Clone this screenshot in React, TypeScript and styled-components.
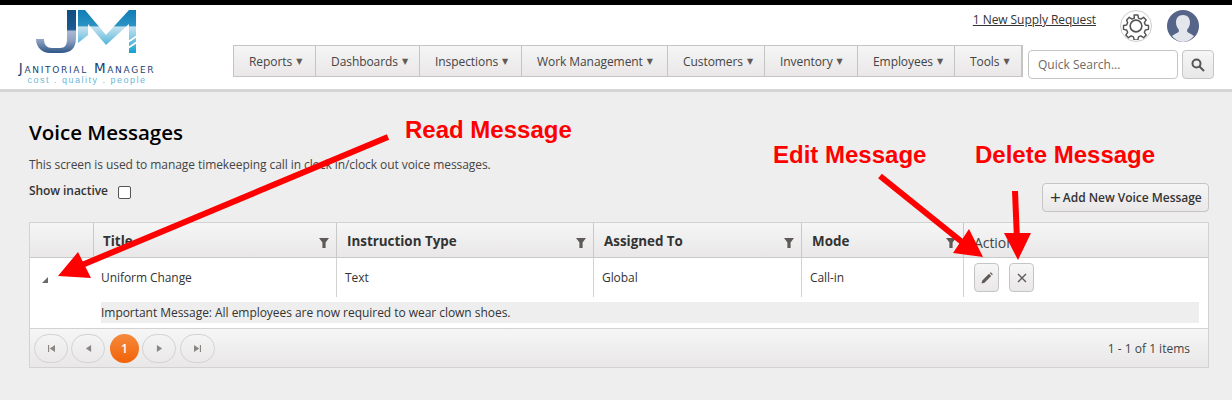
import styled, { createGlobalStyle } from 'styled-components'

const GlobalStyle = createGlobalStyle`
  html, body {
    margin: 0;
    padding: 0;
    background: #eeeeee;
    overflow: hidden;
  }
  * {
    box-sizing: border-box;
  }
`

const navItems = [
  { label: 'Reports', width: 82 },
  { label: 'Dashboards', width: 104 },
  { label: 'Inspections', width: 102 },
  { label: 'Work Management', width: 146 },
  { label: 'Customers', width: 97 },
  { label: 'Inventory', width: 93 },
  { label: 'Employees', width: 97 },
  { label: 'Tools', width: 66 },
]

const columns = [
  { label: 'Title', width: 243 },
  { label: 'Instruction Type', width: 257 },
  { label: 'Assigned To', width: 208 },
  { label: 'Mode', width: 162 },
]

const FilterIcon = () => (
  <svg width="12" height="12" viewBox="0 0 12 12">
    <path d="M1 1h10L7.600 5.600V11H4.400V5.600z" fill="#5f5a57" />
  </svg>
)

const Logo = () => (
  <svg width="102" height="44" viewBox="0 0 102 44">
    <defs>
      <linearGradient id="jGrad" x1="0" y1="0" x2="0" y2="1">
        <stop offset="0" stopColor="#0f4c81" />
        <stop offset="0.45" stopColor="#1d5a92" />
        <stop offset="0.5" stopColor="#a9b6d2" />
        <stop offset="0.7" stopColor="#8fa2c4" />
        <stop offset="1" stopColor="#2f5688" />
      </linearGradient>
      <linearGradient id="mGrad" x1="0" y1="0" x2="0" y2="1">
        <stop offset="0" stopColor="#0f7db5" />
        <stop offset="0.36" stopColor="#2a93c4" />
        <stop offset="0.4" stopColor="#c4e2ef" />
        <stop offset="0.6" stopColor="#8fcde5" />
        <stop offset="1" stopColor="#12a0d2" />
      </linearGradient>
    </defs>
    <path d="M31 0h9v28c0 10-5 15-15 15H14C6 43 0 37 0 29h8c0 6 3 9 8 9h8c5 0 7-3 7-9z" fill="url(#jGrad)" />
    <path d="M42 0h7l21 25L93 0h7v43h-7V14L70 35 52 14v11l-10 8z" fill="url(#mGrad)" />
    <path d="M92 32l9-6M92 38l9-6" stroke="#fff" strokeWidth="1.600" />
  </svg>
)

const GearIcon = () => (
  <svg width="28" height="28" viewBox="0 0 24 24" fill="none" stroke="#555" strokeWidth="1.400">
    <circle cx="12" cy="12" r="5" />
    <path d="M10.200 1.500h3.600l.6 3 2.200.9 2.600-1.700 2.500 2.500-1.700 2.600.9 2.200 3 .6v3.600l-3 .6-.9 2.200 1.700 2.600-2.500 2.500-2.600-1.700-2.200.9-.6 3h-3.600l-.6-3-2.200-.9-2.600 1.700-2.500-2.500 1.700-2.600-.9-2.200-3-.6v-3.600l3-.6.9-2.200L3.100 6.200l2.500-2.500 2.600 1.700 2.200-.9z" transform="translate(1.200 1.200) scale(.9)" strokeLinejoin="round" />
  </svg>
)

const AvatarIcon = () => (
  <svg width="32" height="32" viewBox="0 0 32 32">
    <circle cx="16" cy="16" r="16" fill="#56648a" />
    <path d="M16 5c4.600 0 7 3.200 7 7.400 0 3-1.300 5.600-2.800 7v2.100c0 1 3.800 2.300 6.800 4.500A16 16 0 0 1 16 32 16 16 0 0 1 5 26c3-2.200 6.800-3.500 6.800-4.500v-2.100c-1.500-1.400-2.800-4-2.800-7C9 8.200 11.400 5 16 5z" fill="#e3e6ea" />
  </svg>
)

const SearchIcon = () => (
  <svg width="14" height="14" viewBox="0 0 14 14" fill="none" stroke="#555" strokeWidth="2">
    <circle cx="5.500" cy="5.500" r="4" />
    <path d="M8.500 8.500l4.500 4.500" />
  </svg>
)

const PencilIcon = () => (
  <svg width="12" height="12" viewBox="0 0 12 12">
    <path d="M0.500 11.500l.8-3L8 1.800l2.200 2.200L3.500 10.700zM8.800 1l1-.8 2 2-.8 1z" fill="#5f5a57" />
  </svg>
)

const CloseIcon = () => (
  <svg width="10" height="10" viewBox="0 0 10 10" stroke="#5f5a57" strokeWidth="1.400">
    <path d="M1 1l8 8M9 1l-8 8" />
  </svg>
)

const PagerIcon = ({ kind }: { kind: 'first' | 'prev' | 'next' | 'last' }) => (
  <svg width="7" height="7" viewBox="0 0 8 8" fill="#8a8583">
    {kind === 'first' && <path d="M0 0h1.300v8H0zM8 0v8L2 4z" />}
    {kind === 'prev' && <path d="M7 0v8L1 4z" />}
    {kind === 'next' && <path d="M1 0v8l6-4z" />}
    {kind === 'last' && <path d="M0 0v8l6-4zM6.700 0H8v8H6.700z" />}
  </svg>
)

const App = () => {
  return (
    <Page>
      <GlobalStyle />
      <TopBar />
      <Header>
        <LogoBlock>
          <Logo />
          <LogoName>Janitorial Manager</LogoName>
          <LogoTag>cost . quality . people</LogoTag>
        </LogoBlock>
        <HeaderRight>
          <UserRow>
            <SupplyLink href="#">1 New Supply Request</SupplyLink>
            <GearCircle>
              <GearIcon />
            </GearCircle>
            <AvatarIcon />
          </UserRow>
          <NavRow>
            <Nav>
              {navItems.map((item) => (
                <NavItem key={item.label} $width={item.width}>
                  {item.label}
                  <NavCaret>▼</NavCaret>
                </NavItem>
              ))}
            </Nav>
            <SearchInput placeholder="Quick Search..." />
            <SearchButton>
              <SearchIcon />
            </SearchButton>
          </NavRow>
        </HeaderRight>
      </Header>
      <Content>
        <Title>Voice Messages</Title>
        <Description>
          This screen is used to manage timekeeping call in clock in/clock out
          voice messages.
        </Description>
        <ToolRow>
          <ShowInactive>
            Show inactive
            <Checkbox />
          </ShowInactive>
          <AddButton>
            <Plus>+</Plus>Add New Voice Message
          </AddButton>
        </ToolRow>
        <Grid>
          <HeaderRow>
            <ExpandHead />
            {columns.map((col) => (
              <HeadCell key={col.label} $width={col.width}>
                {col.label}
                <FilterSlot>
                  <FilterIcon />
                </FilterSlot>
              </HeadCell>
            ))}
            <ActionHead>Actions</ActionHead>
          </HeaderRow>
          <BodyRow>
            <ExpandCell>
              <ExpandArrow />
            </ExpandCell>
            <Cell $width={244}>Uniform Change</Cell>
            <Cell $width={257}>Text</Cell>
            <Cell $width={208}>Global</Cell>
            <Cell $width={162}>Call-in</Cell>
            <ActionCell>
              <IconButton>
                <PencilIcon />
              </IconButton>
              <IconButton>
                <CloseIcon />
              </IconButton>
            </ActionCell>
          </BodyRow>
          <DetailRow>
            <DetailText>
              Important Message: All employees are now required to wear clown
              shoes.
            </DetailText>
          </DetailRow>
          <Footer>
            <Pager>
              <PageButton>
                <PagerIcon kind="first" />
              </PageButton>
              <PageButton>
                <PagerIcon kind="prev" />
              </PageButton>
              <CurrentPage>1</CurrentPage>
              <PageButton>
                <PagerIcon kind="next" />
              </PageButton>
              <PageButton>
                <PagerIcon kind="last" />
              </PageButton>
            </Pager>
            <PageInfo>1 - 1 of 1 items</PageInfo>
          </Footer>
        </Grid>
      </Content>

      <Callout $left={405} $top={115}>Read Message</Callout>
      <Callout $left={773} $top={140}>Edit Message</Callout>
      <Callout $left={975} $top={140}>Delete Message</Callout>
      <ArrowLayer width="1232" height="400" viewBox="0 0 1232 400">
        <path d="M388 137L82 265" stroke="#f00" strokeWidth="6" />
        <path d="M78 252L58 276L91 278z" fill="#f00" />
        <path d="M880 176L962 242" stroke="#f00" strokeWidth="6" />
        <path d="M969 229L953 253L983 257z" fill="#f00" />
        <path d="M1015 191L1017 240" stroke="#f00" strokeWidth="6" />
        <path d="M1004 233L1031 233L1018 260z" fill="#f00" />
      </ArrowLayer>
    </Page>
  )
}

const Page = styled.div`
  position: relative;
  width: 1232px;
  height: 400px;
  overflow: hidden;
  background: #eeeeee;
  font-family: 'Open Sans', sans-serif;
  font-size: 12px;
  letter-spacing: -0.07px;
  color: #333;
`

const TopBar = styled.div`
  height: 5px;
  background: #000;
`

const Header = styled.header`
  display: flex;
  height: 87px;
  padding-left: 17px;
  background: #fff;
  border-bottom: 3px solid #d5d5d5;
`

const LogoBlock = styled.div`
  display: flex;
  flex-direction: column;
  align-items: center;
  width: 140px;
  margin-right: 76px;
  padding-top: 5px;
`

const LogoName = styled.div`
  margin-top: 7px;
  font-family: 'DejaVu Sans', sans-serif;
  font-size: 13.500px;
  line-height: 15px;
  font-variant: small-caps;
  letter-spacing: 1.7px;
  white-space: nowrap;
  color: #1d3f72;
`

const LogoTag = styled.div`
  margin-top: -1px;
  font-family: 'Liberation Sans', sans-serif;
  font-size: 9px;
  line-height: 10px;
  letter-spacing: 1.5px;
  white-space: nowrap;
  color: #6bb8d8;
`

const HeaderRight = styled.div`
  display: flex;
  flex: 1;
  flex-direction: column;
`

const UserRow = styled.div`
  display: flex;
  justify-content: flex-end;
  align-items: flex-start;
  height: 40px;
  padding: 5px 33px 0 0;
`

const SupplyLink = styled.a`
  margin: 1px 24px 0 0;
  color: #333;
  font-size: 12px;
`

const GearCircle = styled.div`
  display: flex;
  align-items: center;
  justify-content: center;
  width: 32px;
  height: 32px;
  margin-right: 15px;
  border: 1px solid #ccc;
  border-radius: 50%;
`

const NavRow = styled.div`
  display: flex;
  align-items: flex-start;
`

const Nav = styled.nav`
  display: flex;
  height: 32px;
  border: 1px solid #c4c4c4;
  border-right: 2px solid #c4c4c4;
  background: linear-gradient(#f6f6f6, #e9e7e7);
`

const NavItem = styled.div<{ $width: number }>`
  display: flex;
  align-items: center;
  gap: 4px;
  width: ${(p) => p.$width}px;
  padding-left: 15px;
  border-right: 1px solid #c4c4c4;
  color: #444;
  white-space: nowrap;

  &:last-child {
    border-right: 0;
  }
`

const NavCaret = styled.span`
  font-family: 'DejaVu Sans', sans-serif;
  font-size: 8px;
  color: #5f5a57;
`

const SearchInput = styled.input`
  width: 150px;
  height: 29px;
  margin: 5px 0 0 5px;
  padding: 0 9px;
  border: 1px solid #c5c5c5;
  border-radius: 4px;
  background: #fff;
  font-family: 'Open Sans', sans-serif;
  font-size: 12px;

  &::placeholder {
    color: #6f6a66;
    opacity: 1;
  }
`

const SearchButton = styled.button`
  display: flex;
  align-items: center;
  justify-content: center;
  width: 32px;
  height: 29px;
  margin: 5px 0 0 4px;
  padding: 0;
  border: 1px solid #c5c5c5;
  border-radius: 4px;
  background: linear-gradient(#f6f6f6, #e9e7e7);
`

const Content = styled.main`
  padding: 27px 23px 0 29px;
`

const Title = styled.h1`
  margin: 0;
  font-size: 20.500px;
  line-height: 27px;
  font-weight: 600;
  letter-spacing: 0;
  color: #000;
`

const Description = styled.p`
  margin: 10px 0 0;
  line-height: 17px;
  color: #444;
`

const ToolRow = styled.div`
  display: flex;
  justify-content: space-between;
  height: 49px;
`

const ShowInactive = styled.label`
  display: flex;
  align-items: center;
  gap: 10px;
  height: 20px;
  margin-top: 7px;
  font-weight: 600;
`

const Checkbox = styled.span`
  display: block;
  width: 13px;
  height: 13px;
  margin-top: 5px;
  border: 1px solid #555;
  border-radius: 2px;
  background: #fff;
`

const AddButton = styled.button`
  display: flex;
  align-items: center;
  justify-content: flex-start;
  width: 167px;
  height: 29px;
  margin-top: 10px;
  padding: 0 0 0 7px;
  border: 1px solid #c5c5c5;
  border-radius: 4px;
  background: linear-gradient(#f6f6f6, #e9e7e7);
  font-family: 'Open Sans', sans-serif;
  font-size: 12px;
  font-weight: 600;
  letter-spacing: -0.03px;
  color: #333;
`

const Plus = styled.span`
  margin-right: 2px;
  font-size: 19px;
  line-height: 1;
  font-weight: 400;
`

const Grid = styled.section`
  width: 1180px;
  height: 146px;
  border: 1px solid #d2d2d2;
  background: #fff;
`

const HeaderRow = styled.div`
  display: flex;
  height: 35px;
  border-bottom: 1px solid #c9c9c9;
  background: linear-gradient(#f6f6f6, #e9e7e7);
`

const ExpandHead = styled.div`
  width: 64px;
  border-right: 1px solid #c9c9c9;
`

const HeadCell = styled.div<{ $width: number }>`
  position: relative;
  display: flex;
  align-items: center;
  width: ${(p) => p.$width}px;
  padding: 2px 0 0 9px;
  border-right: 1px solid #c9c9c9;
  font-size: 13.400px;
  font-weight: 700;
  letter-spacing: 0;
  color: #333;

  & + & {
    padding-left: 10px;
  }
`

const FilterSlot = styled.span`
  position: absolute;
  right: 6px;
  top: 14px;
  display: flex;
`

const ActionHead = styled.div`
  display: flex;
  align-items: center;
  flex: 1;
  padding: 4px 0 0 10px;
  font-size: 14px;
  color: #444;
`

const BodyRow = styled.div`
  display: flex;
  height: 39px;
`

const ExpandCell = styled.div`
  display: flex;
  align-items: center;
  width: 63px;
  padding: 4px 0 0 12px;
`

const ExpandArrow = styled.span`
  width: 0;
  height: 0;
  border-left: 6px solid transparent;
  border-bottom: 6px solid #6f6a66;
`

const Cell = styled.div<{ $width: number }>`
  display: flex;
  align-items: center;
  width: ${(p) => p.$width}px;
  padding-left: 8px;
  border-right: 1px solid #d2d2d2;
  color: #333;
`

const ActionCell = styled.div`
  display: flex;
  align-items: center;
  gap: 10px;
  flex: 1;
  padding-left: 10px;
`

const IconButton = styled.button`
  display: flex;
  align-items: center;
  justify-content: center;
  width: 25px;
  height: 29px;
  padding: 0;
  border: 1px solid #c5c5c5;
  border-radius: 4px;
  background: linear-gradient(#f6f6f6, #e9e7e7);
`

const DetailRow = styled.div`
  height: 31px;
  padding: 5px 9px 0 71px;
`

const DetailText = styled.div`
  height: 21px;
  line-height: 21px;
  letter-spacing: -0.04px;
  background: #eeeeee;
  color: #333;
`

const Footer = styled.footer`
  display: flex;
  align-items: center;
  justify-content: space-between;
  height: 39px;
  padding: 0 18px 0 4px;
  border-top: 1px solid #d2d2d2;
  background: linear-gradient(#f6f6f6, #e9e7e7);
`

const Pager = styled.div`
  display: flex;
  gap: 3px;
`

const PageButton = styled.span`
  display: flex;
  align-items: center;
  justify-content: center;
  width: 34px;
  height: 29px;
  border: 1px solid #d2d2d2;
  border-radius: 15px;

  &:last-child {
    width: 35px;
    margin-left: 1px;
  }
`

const CurrentPage = styled.span`
  display: flex;
  align-items: center;
  justify-content: center;
  width: 29px;
  height: 29px;
  margin: 0 0 0 2px;
  border-radius: 50%;
  background: linear-gradient(#f58a3c, #f26208);
  color: #fff;
  font-weight: 600;
`

const PageInfo = styled.span`
  letter-spacing: 0;
  color: #444;
`

const Callout = styled.div<{ $left: number; $top: number }>`
  position: absolute;
  left: ${(p) => p.$left}px;
  top: ${(p) => p.$top}px;
  font-family: 'Liberation Sans', sans-serif;
  font-size: 24px;
  line-height: 30px;
  font-weight: 700;
  letter-spacing: 0;
  color: #f00;
  white-space: nowrap;
`

const ArrowLayer = styled.svg`
  position: absolute;
  left: 0;
  top: 0;
  pointer-events: none;
`

export default App
